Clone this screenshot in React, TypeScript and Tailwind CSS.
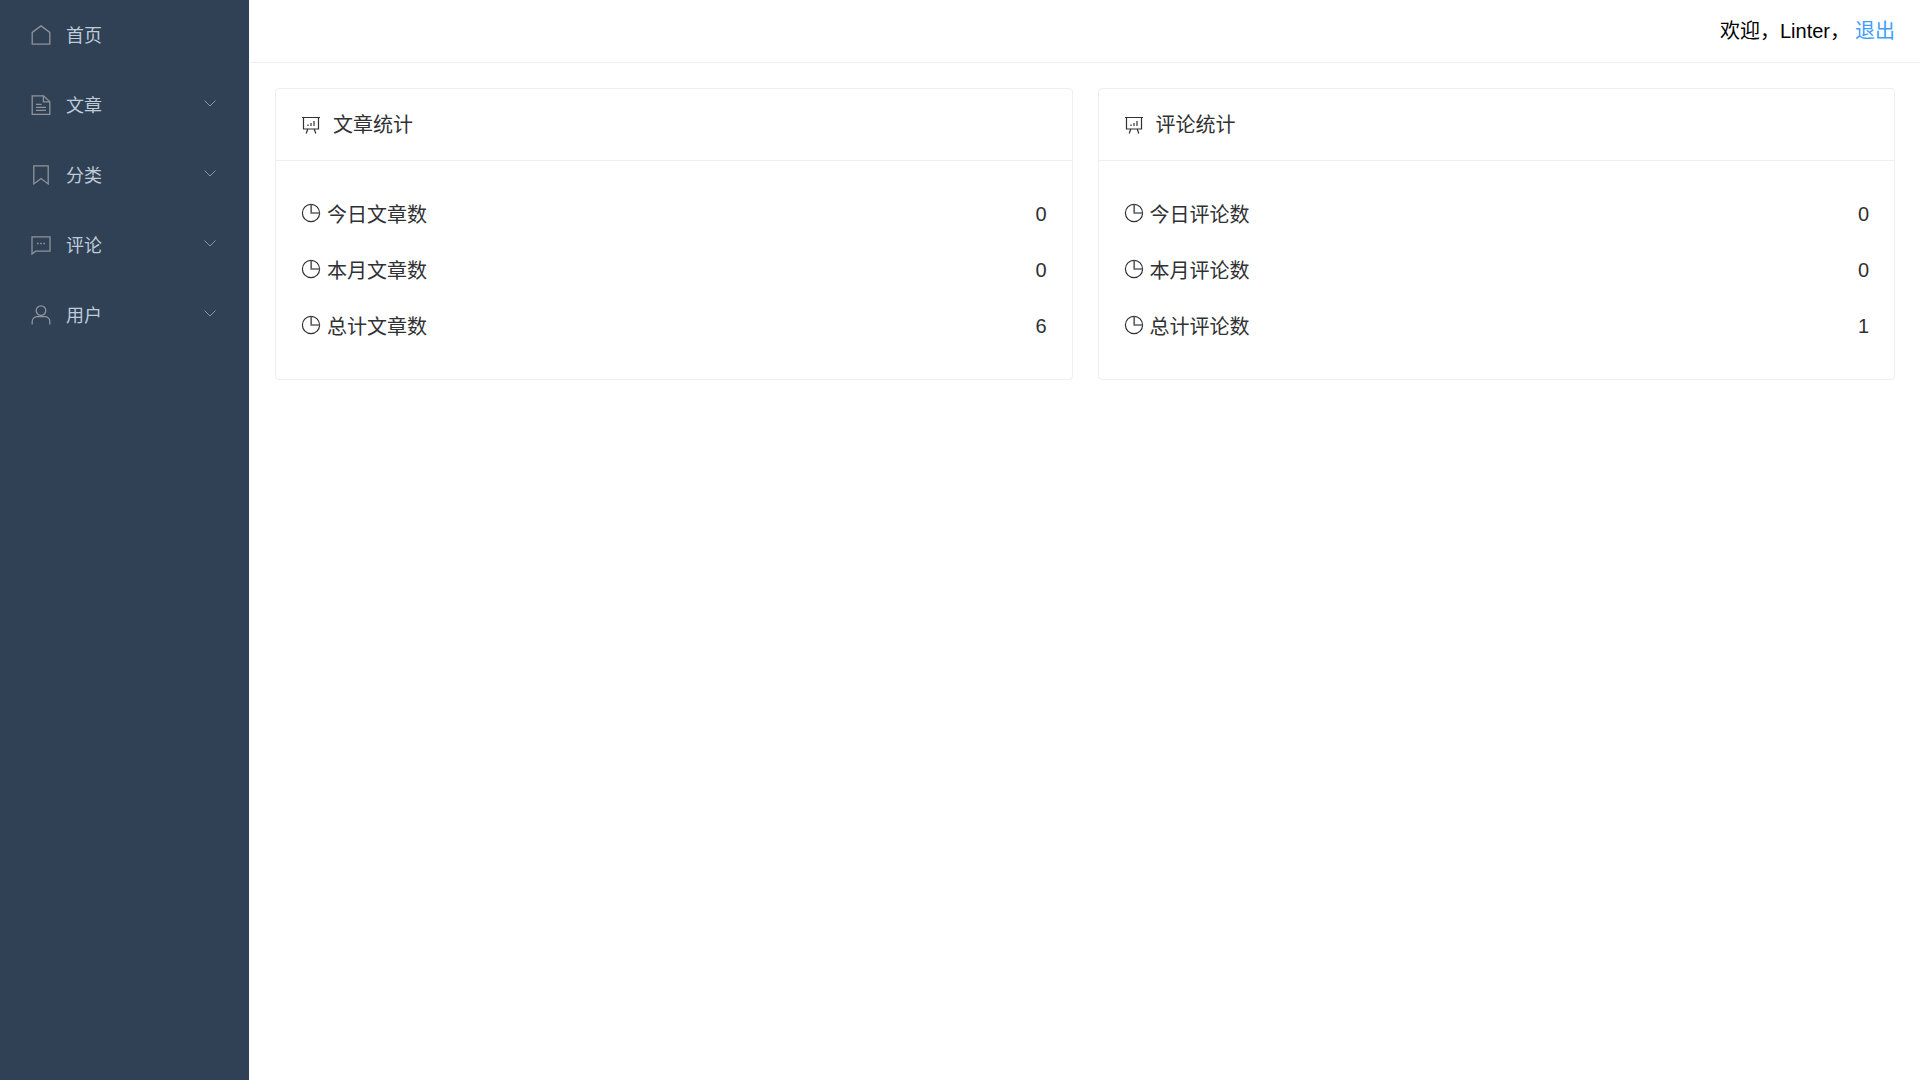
import type { ReactNode } from "react";

const FONT = "font-['Liberation_Sans','Noto_Sans_CJK_SC',sans-serif]";

function Icon({ children, className }: { children: ReactNode; className?: string }) {
  return (
    <svg
      viewBox="0 0 20 20"
      fill="none"
      stroke="currentColor"
      strokeWidth="1.3"
      className={className}
    >
      {children}
    </svg>
  );
}

const HomeIcon = <path d="M1.2 19.2V7.4L10 0.9l8.8 6.5v11.8z" />;

const DocIcon = (
  <>
    <path d="M1.2 0.9h11.4l6.2 5.8v12.6H1.2z" />
    <path d="M12.4 1.2v5.6h6.2" />
    <path d="M5 9.4h5.6M5 12.4h10M5 15.4h10" />
  </>
);

const BookmarkIcon = <path d="M2.8 0.9h14.4v18l-7.2-5.4-7.2 5.4z" />;

const ChatIcon = (
  <>
    <path d="M1 1.8h18v14.4H4.6L1 19z" />
    <path d="M6 8.6h1.6M9.2 8.6h1.6M12.4 8.6H14" strokeWidth="1.5" />
  </>
);

const UserIcon = (
  <>
    <circle cx="10" cy="5.6" r="4.8" />
    <path d="M1.2 19.4v-3c0-3 2.6-4.8 5-4.8h7.6c2.4 0 5 1.8 5 4.8v3" />
  </>
);

const MENU = [
  { label: "首页", icon: HomeIcon, arrow: false },
  { label: "文章", icon: DocIcon, arrow: true },
  { label: "分类", icon: BookmarkIcon, arrow: true },
  { label: "评论", icon: ChatIcon, arrow: true },
  { label: "用户", icon: UserIcon, arrow: true },
];

const CARDS = [
  {
    title: "文章统计",
    rows: [
      { label: "今日文章数", value: 0 },
      { label: "本月文章数", value: 0 },
      { label: "总计文章数", value: 6 },
    ],
  },
  {
    title: "评论统计",
    rows: [
      { label: "今日评论数", value: 0 },
      { label: "本月评论数", value: 0 },
      { label: "总计评论数", value: 1 },
    ],
  },
];

function MenuItem({ label, icon, arrow }: (typeof MENU)[0]) {
  return (
    <div className="flex h-[70px] items-center pl-[31px] pr-[33px] text-[18px] text-[#bfcbd9]">
      <Icon className="h-[20px] w-[20px] text-[#909399]">{icon}</Icon>
      <span className="ml-[15px] flex-1 pt-[2px]">{label}</span>
      {arrow && (
        <svg
          viewBox="0 0 12 7"
          fill="none"
          stroke="currentColor"
          strokeWidth="1"
          className="mb-[4px] h-[7px] w-[12px] text-[#909399]"
        >
          <path d="M0.5 0.5L6 6l5.5-5.5" />
        </svg>
      )}
    </div>
  );
}

function StatCard({ title, rows }: (typeof CARDS)[0]) {
  return (
    <div className="flex-1 overflow-hidden rounded-[4px] border border-[#ebeef5] bg-white">
      <div className="flex h-[72px] items-center border-b border-[#ebeef5] px-[25px]">
        <svg
          viewBox="0 0 20 20"
          fill="none"
          stroke="currentColor"
          strokeWidth="1.2"
          className="h-[20px] w-[20px] text-[#303133]"
        >
          <path d="M1 2.5h18" />
          <path d="M2.5 2.5v11.5h15V2.5" />
          <path d="M6.8 14l-1.6 4.5M13.2 14l1.6 4.5" />
          <path d="M7 11V9.5M10 11V8M13 11V6" />
        </svg>
        <span className="ml-[12px] text-[20px] text-[#303133]">{title}</span>
      </div>
      <div className="px-[25px] py-[25px]">
        {rows.map((r) => (
          <div key={r.label} className="flex h-[56px] items-center text-[20px] text-[#303133]">
            <svg
              viewBox="0 0 20 20"
              fill="none"
              stroke="currentColor"
              strokeWidth="1.2"
              className="mb-[2px] h-[20px] w-[20px] text-[#303133]"
            >
              <circle cx="10" cy="10" r="8.6" />
              <path d="M10.2 1.6v8.4h8.4" stroke="#606266" strokeWidth="1.7" />
            </svg>
            <span className="ml-[6px] flex-1 pt-px">{r.label}</span>
            <span>{r.value}</span>
          </div>
        ))}
      </div>
    </div>
  );
}

export default function App() {
  return (
    <div className={`flex min-h-[1080px] bg-white ${FONT}`}>
      {/* Sidebar */}
      <aside className="w-[249px] shrink-0 bg-[#304156]">
        {MENU.map((m) => (
          <MenuItem key={m.label} {...m} />
        ))}
      </aside>

      <div className="flex-1 pl-px">
        {/* Top bar */}
        <header className="flex h-[63px] items-start justify-end border-b border-[#ebeef5] px-[25px] pt-[20px] text-[20px] leading-[23px] text-black">
          <span>欢迎，Linter，</span>
          <a className="ml-[5px] text-[#409eff]">退出</a>
        </header>

        {/* Stat cards */}
        <main className="flex gap-[25px] p-[25px]">
          {CARDS.map((c) => (
            <StatCard key={c.title} {...c} />
          ))}
        </main>
      </div>
    </div>
  );
}
